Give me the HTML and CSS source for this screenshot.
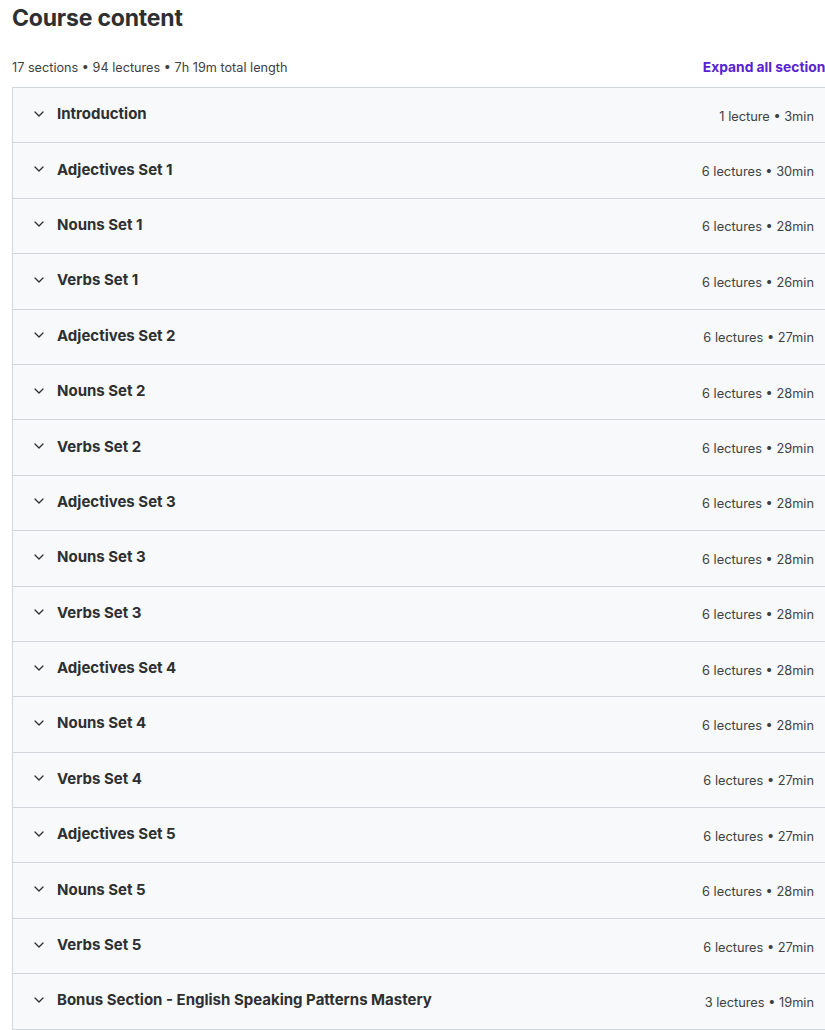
FILE: index.html
```html
<!DOCTYPE html>
<html>
<head>
<meta charset="utf-8">
<link rel="stylesheet" href="styles.css">
</head>
<body>
<div class="page">
  <h2 class="title">Course content</h2>
  <div class="stats">
    <span class="summary">17 sections • 94 lectures • 7h 19m total length</span>
    <span class="expand">Expand all sections</span>
  </div>
  <div class="accordion">
    <div class="row"><span class="chev"><svg viewBox="0 0 10 6" width="10" height="6"><path d="M1 1l4 4 4-4" fill="none" stroke="#2d2f31" stroke-width="1.3" stroke-linecap="round" stroke-linejoin="round"/></svg></span><span class="name">Introduction</span><span class="meta">1 lecture • 3min</span></div>
    <div class="row"><span class="chev"><svg viewBox="0 0 10 6" width="10" height="6"><path d="M1 1l4 4 4-4" fill="none" stroke="#2d2f31" stroke-width="1.3" stroke-linecap="round" stroke-linejoin="round"/></svg></span><span class="name">Adjectives Set 1</span><span class="meta">6 lectures • 30min</span></div>
    <div class="row"><span class="chev"><svg viewBox="0 0 10 6" width="10" height="6"><path d="M1 1l4 4 4-4" fill="none" stroke="#2d2f31" stroke-width="1.3" stroke-linecap="round" stroke-linejoin="round"/></svg></span><span class="name">Nouns Set 1</span><span class="meta">6 lectures • 28min</span></div>
    <div class="row"><span class="chev"><svg viewBox="0 0 10 6" width="10" height="6"><path d="M1 1l4 4 4-4" fill="none" stroke="#2d2f31" stroke-width="1.3" stroke-linecap="round" stroke-linejoin="round"/></svg></span><span class="name">Verbs Set 1</span><span class="meta">6 lectures • 26min</span></div>
    <div class="row"><span class="chev"><svg viewBox="0 0 10 6" width="10" height="6"><path d="M1 1l4 4 4-4" fill="none" stroke="#2d2f31" stroke-width="1.3" stroke-linecap="round" stroke-linejoin="round"/></svg></span><span class="name">Adjectives Set 2</span><span class="meta">6 lectures • 27min</span></div>
    <div class="row"><span class="chev"><svg viewBox="0 0 10 6" width="10" height="6"><path d="M1 1l4 4 4-4" fill="none" stroke="#2d2f31" stroke-width="1.3" stroke-linecap="round" stroke-linejoin="round"/></svg></span><span class="name">Nouns Set 2</span><span class="meta">6 lectures • 28min</span></div>
    <div class="row"><span class="chev"><svg viewBox="0 0 10 6" width="10" height="6"><path d="M1 1l4 4 4-4" fill="none" stroke="#2d2f31" stroke-width="1.3" stroke-linecap="round" stroke-linejoin="round"/></svg></span><span class="name">Verbs Set 2</span><span class="meta">6 lectures • 29min</span></div>
    <div class="row"><span class="chev"><svg viewBox="0 0 10 6" width="10" height="6"><path d="M1 1l4 4 4-4" fill="none" stroke="#2d2f31" stroke-width="1.3" stroke-linecap="round" stroke-linejoin="round"/></svg></span><span class="name">Adjectives Set 3</span><span class="meta">6 lectures • 28min</span></div>
    <div class="row"><span class="chev"><svg viewBox="0 0 10 6" width="10" height="6"><path d="M1 1l4 4 4-4" fill="none" stroke="#2d2f31" stroke-width="1.3" stroke-linecap="round" stroke-linejoin="round"/></svg></span><span class="name">Nouns Set 3</span><span class="meta">6 lectures • 28min</span></div>
    <div class="row"><span class="chev"><svg viewBox="0 0 10 6" width="10" height="6"><path d="M1 1l4 4 4-4" fill="none" stroke="#2d2f31" stroke-width="1.3" stroke-linecap="round" stroke-linejoin="round"/></svg></span><span class="name">Verbs Set 3</span><span class="meta">6 lectures • 28min</span></div>
    <div class="row"><span class="chev"><svg viewBox="0 0 10 6" width="10" height="6"><path d="M1 1l4 4 4-4" fill="none" stroke="#2d2f31" stroke-width="1.3" stroke-linecap="round" stroke-linejoin="round"/></svg></span><span class="name">Adjectives Set 4</span><span class="meta">6 lectures • 28min</span></div>
    <div class="row"><span class="chev"><svg viewBox="0 0 10 6" width="10" height="6"><path d="M1 1l4 4 4-4" fill="none" stroke="#2d2f31" stroke-width="1.3" stroke-linecap="round" stroke-linejoin="round"/></svg></span><span class="name">Nouns Set 4</span><span class="meta">6 lectures • 28min</span></div>
    <div class="row"><span class="chev"><svg viewBox="0 0 10 6" width="10" height="6"><path d="M1 1l4 4 4-4" fill="none" stroke="#2d2f31" stroke-width="1.3" stroke-linecap="round" stroke-linejoin="round"/></svg></span><span class="name">Verbs Set 4</span><span class="meta">6 lectures • 27min</span></div>
    <div class="row"><span class="chev"><svg viewBox="0 0 10 6" width="10" height="6"><path d="M1 1l4 4 4-4" fill="none" stroke="#2d2f31" stroke-width="1.3" stroke-linecap="round" stroke-linejoin="round"/></svg></span><span class="name">Adjectives Set 5</span><span class="meta">6 lectures • 27min</span></div>
    <div class="row"><span class="chev"><svg viewBox="0 0 10 6" width="10" height="6"><path d="M1 1l4 4 4-4" fill="none" stroke="#2d2f31" stroke-width="1.3" stroke-linecap="round" stroke-linejoin="round"/></svg></span><span class="name">Nouns Set 5</span><span class="meta">6 lectures • 28min</span></div>
    <div class="row"><span class="chev"><svg viewBox="0 0 10 6" width="10" height="6"><path d="M1 1l4 4 4-4" fill="none" stroke="#2d2f31" stroke-width="1.3" stroke-linecap="round" stroke-linejoin="round"/></svg></span><span class="name">Verbs Set 5</span><span class="meta">6 lectures • 27min</span></div>
    <div class="row"><span class="chev"><svg viewBox="0 0 10 6" width="10" height="6"><path d="M1 1l4 4 4-4" fill="none" stroke="#2d2f31" stroke-width="1.3" stroke-linecap="round" stroke-linejoin="round"/></svg></span><span class="name">Bonus Section - English Speaking Patterns Mastery</span><span class="meta">3 lectures • 19min</span></div>
  </div>
</div>
</body>
</html>
```

FILE: styles.css
```css
html, body {
  margin: 0;
  padding: 0;
  overflow: hidden;
  background: #ffffff;
}
body {
  font-family: Inter, "Noto Sans", "Liberation Sans", sans-serif;
  color: #2d2f31;
}
.page {
  padding-left: 12px;
  width: 827px;
}
.title {
  margin: 0;
  font-size: 23px;
  font-weight: 700;
  line-height: 36px;
  letter-spacing: -0.2px;
}
.stats {
  display: flex;
  justify-content: space-between;
  align-items: center;
  margin-top: 21px;
  height: 20px;
  margin-bottom: 10px;
}
.summary {
  font-size: 12.7px;
  color: #3e4143;
}
.expand {
  font-size: 13.8px;
  font-weight: 700;
  color: #5624d0;
  padding-right: 6px;
}
.accordion {
  border: 1px solid #d1d7dc;
  border-bottom: none;
}
.row {
  display: flex;
  align-items: center;
  height: 54.4px;
  padding: 0 24px 0 21px;
  background: #f7f9fa;
  border-bottom: 1px solid #d1d7dc;
}
.chev {
  display: flex;
  width: 10px;
  margin-right: 13px;
  margin-bottom: 3px;
}
.name {
  font-size: 15px;
  font-weight: 700;
  flex: 1;
  margin-bottom: 3px;
}
.meta {
  font-size: 12.8px;
  color: #3e4143;
  margin-top: 2px;
}
```
